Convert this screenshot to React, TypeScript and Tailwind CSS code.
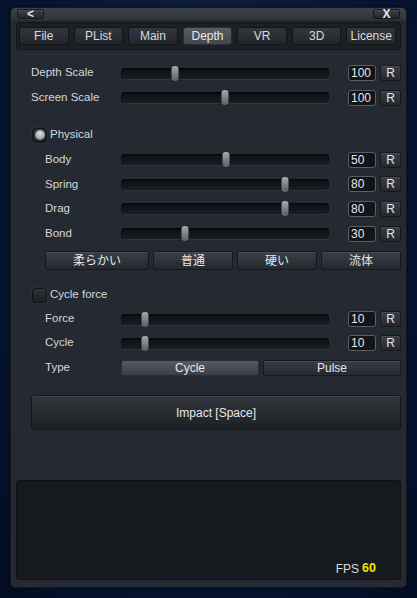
const font = { fontFamily: '"Liberation Sans", Arial, sans-serif' };
const jpFont = { fontFamily: '"Liberation Sans", "Noto Sans CJK JP", sans-serif' };

const tabs = ["File", "PList", "Main", "Depth", "VR", "3D", "License"];

function SmallButton({ label, className = "" }: { label: string; className?: string }) {
  return (
    <div
      className={`flex items-center justify-center rounded-[2px] border border-[#15181c] bg-gradient-to-b from-[#3a3f46] to-[#25292f] text-[12px] leading-none text-[#e4e6e8] shadow-[inset_0_1px_0_rgba(255,255,255,0.08)] ${className}`}
    >
      {label}
    </div>
  );
}

function Slider({ value }: { value: number }) {
  return (
    <div className="relative h-[11px] w-[208px] rounded-[4px] bg-gradient-to-b from-[#0d0f12] to-[#1a1d21] shadow-[inset_0_1px_2px_rgba(0,0,0,0.8),0_1px_0_rgba(255,255,255,0.05)]">
      <div
        className="absolute top-[-2px] h-[15px] w-[7px] -translate-x-1/2 rounded-[3px] bg-gradient-to-b from-[#a8abae] via-[#7e8286] to-[#5b5f63] shadow-[0_0_1px_rgba(0,0,0,0.9)]"
        style={{ left: `${value * 100}%` }}
      />
    </div>
  );
}

function SliderRow({
  label,
  value,
  pos,
  indent = false,
  h = "h-[25px]",
}: {
  label: string;
  value: string;
  pos: number;
  indent?: boolean;
  h?: string;
}) {
  return (
    <div className={`flex items-center ${h}`}>
      <div className={`w-[90px] shrink-0 text-[11.5px] text-[#d4d7da] ${indent ? "pl-[14px]" : ""}`}>{label}</div>
      <Slider value={pos} />
      <div className="ml-[19px] flex h-[16px] w-[28px] items-center rounded-[3px] border border-[#5c6065] bg-[#121417] pl-[2px] text-[12px] text-[#e6e8ea]">
        {value}
      </div>
      <SmallButton label="R" className="ml-[4px] h-[16px] w-[21px] text-[12.5px]" />
    </div>
  );
}

function Check({ on, label }: { on: boolean; label: string }) {
  return (
    <div className="flex h-[24px] items-center pl-[1px]">
      <div className="flex h-[15px] w-[15px] items-center justify-center rounded-[4px] border border-[#101216] bg-gradient-to-b from-[#2f333a] to-[#1c1f24] shadow-[0_0_0_1px_rgba(255,255,255,0.04)]">
        {on && <div className="h-[10px] w-[10px] rounded-full bg-[radial-gradient(circle_at_50%_40%,#e2e4e6,#9ea2a6_60%,#6a6e72)]" />}
      </div>
      <span className="ml-[3px] text-[11.5px] text-[#d4d7da]">{label}</span>
    </div>
  );
}

export default function App() {
  return (
    <div
      className="flex h-[598px] w-[417px] flex-col bg-[radial-gradient(ellipse_at_50%_30%,#12243f,#061532_60%,#020d24)] px-[10px] pb-[10px] pt-[7px]"
      style={font}
    >
      <div className="flex flex-1 flex-col rounded-[5px] border border-[#15181d] bg-[#252a32] shadow-[0_0_3px_rgba(0,0,0,0.6)]">
        <div className="flex h-[12px] items-start justify-between rounded-t-[5px] bg-gradient-to-b from-[#3e434a] to-[#30353c] px-[6px] pt-[1px]">
          <SmallButton label="<" className="h-[10px] w-[27px] text-[11px] font-bold" />
          <SmallButton label="X" className="h-[10px] w-[27px] text-[12px] font-bold" />
        </div>

        <div className="mx-[5px] mt-[2px] flex h-[28px] gap-[5px] rounded-[3px] border border-[#121418] bg-[#1c1f24] py-[4px] pl-[2px] pr-[4px]">
          {tabs.map((t) => (
            <div
              key={t}
              className={`flex flex-1 items-center justify-center rounded-[3px] border text-[12px] ${
                t === "Depth"
                  ? "border-[#2a2e33] bg-gradient-to-b from-[#5a5e64] to-[#43474d] text-[#e8eaec]"
                  : "border-[#121418] bg-gradient-to-b from-[#33373d] to-[#23272c] text-[#d8dadc]"
              }`}
            >
              {t}
            </div>
          ))}
        </div>

        <div className="flex flex-col pl-[20px] pr-[5px] pt-[11px]">
          <SliderRow label="Depth Scale" value="100" pos={0.26} h="h-[24px]" />
          <SliderRow label="Screen Scale" value="100" pos={0.5} h="h-[25px]" />

          <div className="mt-[13px]">
            <Check on label="Physical" />
          </div>
          <SliderRow label="Body" value="50" pos={0.505} indent />
          <SliderRow label="Spring" value="80" pos={0.79} indent h="h-[24.5px]" />
          <SliderRow label="Drag" value="80" pos={0.79} indent h="h-[24.5px]" />
          <SliderRow label="Bond" value="30" pos={0.31} indent />

          <div className="ml-[14px] mt-[5px] flex h-[19px] gap-[4px]" style={jpFont}>
            <SmallButton label="柔らかい" className="w-[104px] text-[#b3b6ba]" />
            <SmallButton label="普通" className="flex-1 text-[#b3b6ba]" />
            <SmallButton label="硬い" className="flex-1 text-[#b3b6ba]" />
            <SmallButton label="流体" className="flex-1 text-[#b3b6ba]" />
          </div>

          <div className="mt-[13px]">
            <Check on={false} label="Cycle force" />
          </div>
          <SliderRow label="Force" value="10" pos={0.115} indent h="h-[24px]" />
          <SliderRow label="Cycle" value="10" pos={0.115} indent h="h-[24px]" />
          <div className="flex h-[25px] items-center">
            <div className="w-[90px] shrink-0 pl-[14px] text-[11.5px] text-[#d4d7da]">Type</div>
            <div className="flex h-[16px] flex-1 gap-[4px]">
              <div className="flex flex-1 items-center justify-center rounded-[2px] border border-[#2a2e33] bg-gradient-to-b from-[#575b61] to-[#3c4046] text-[12px] text-[#e6e8ea]">
                Cycle
              </div>
              <SmallButton label="Pulse" className="flex-1" />
            </div>
          </div>

          <div className="mt-[15px] flex h-[35px] items-center justify-center rounded-[3px] border border-[#14171b] bg-gradient-to-b from-[#34383e] to-[#1d2025] text-[12px] text-[#e6e8ea] shadow-[inset_0_1px_0_rgba(255,255,255,0.07)]">
            Impact [Space]
          </div>
        </div>

        <div className="mx-[5px] mb-[7px] mt-auto flex h-[100px] items-end justify-end rounded-[3px] border border-[#0f1114] bg-[#16191d] pb-[1px] pr-[24px]">
          <span className="text-[12px] text-[#d8dadc]">FPS</span>
          <span className="ml-[3px] text-[12.5px] font-bold text-[#f5e600]">60</span>
        </div>
      </div>
    </div>
  );
}
